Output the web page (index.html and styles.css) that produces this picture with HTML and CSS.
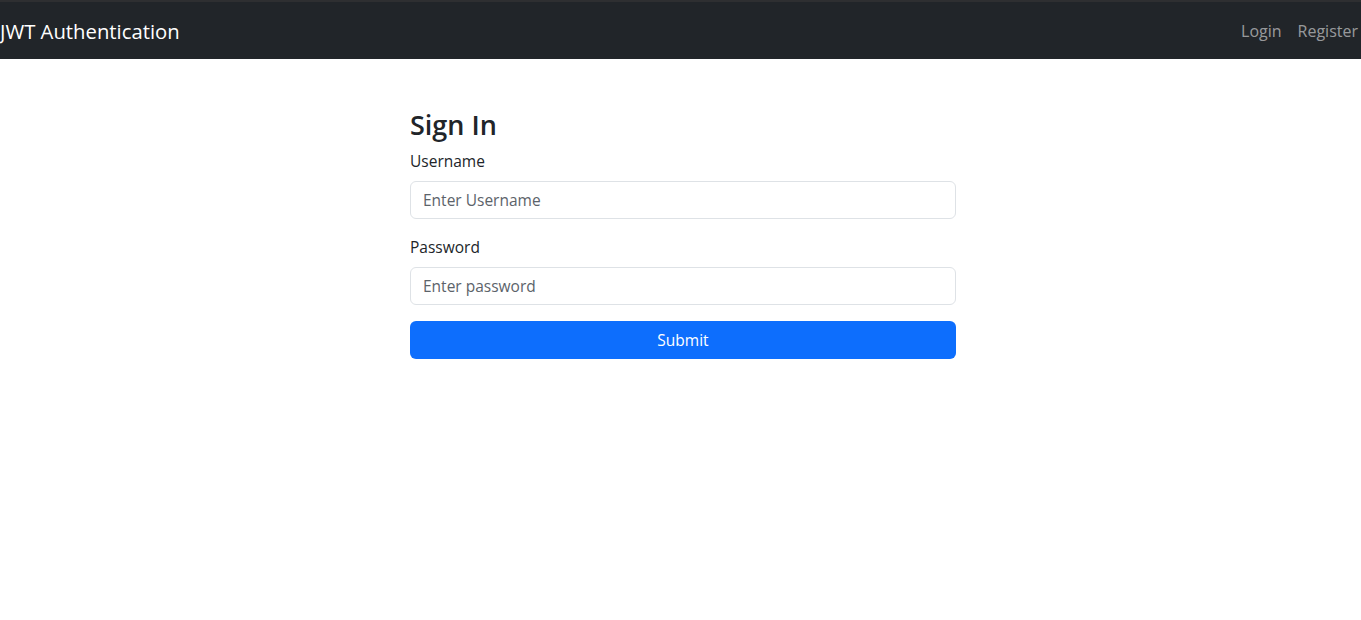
FILE: index.html
```html
<!DOCTYPE html>
<html lang="en">
<head>
<meta charset="utf-8">
<title>JWT Authentication</title>
<link rel="stylesheet" href="styles.css">
</head>
<body>
<div class="topline"></div>
<nav class="navbar">
  <a class="brand" href="#">JWT Authentication</a>
  <div class="nav-links">
    <a class="nav-link" href="#">Login</a>
    <a class="nav-link" href="#">Register</a>
  </div>
</nav>
<main class="page">
  <form class="signin">
    <h3 class="title">Sign In</h3>
    <div class="field">
      <label class="label" for="u">Username</label>
      <input class="input" id="u" type="text" placeholder="Enter Username">
    </div>
    <div class="field">
      <label class="label" for="p">Password</label>
      <input class="input" id="p" type="password" placeholder="Enter password">
    </div>
    <button class="btn" type="button">Submit</button>
  </form>
</main>
</body>
</html>
```
FILE: styles.css
```css
* { box-sizing: border-box; }
html, body { margin: 0; padding: 0; }
body {
  font-family: "Open Sans", "Noto Sans", sans-serif;
  font-size: 16px;
  line-height: 1.5;
  color: #212529;
  background: #fff;
}
.topline { height: 2px; background: #2e2f31; }
.navbar {
  height: 57px;
  background: #212529;
  display: flex;
  align-items: center;
  justify-content: space-between;
  padding: 0 3px 0 0;
}
.brand {
  color: #fff;
  text-decoration: none;
  font-size: 20.3px;
  line-height: 30px;
}
.nav-links { display: flex; }
.nav-link {
  color: rgba(255,255,255,.55);
  text-decoration: none;
  font-size: 16px;
  line-height: 24px;
  padding: 8px 8px;
}
.nav-link:last-child { padding-right: 0; }
.page {
  display: flex;
  justify-content: center;
  padding-top: 49px;
  padding-left: 5px;
}
.signin { width: 546px; }
.title {
  margin: 0 0 8px;
  font-size: 27px;
  font-weight: 600;
  line-height: 33px;
}
.field { margin-bottom: 16px; }
.label {
  display: block;
  margin-bottom: 8px;
  font-size: 15.5px;
  line-height: 24px;
}
.input {
  display: block;
  width: 100%;
  height: 38px;
  padding: 6px 12px;
  font-family: inherit;
  font-size: 15.5px;
  color: #212529;
  border: 1px solid #dee2e6;
  border-radius: 6px;
  background: #fff;
}
.input::placeholder { color: #5c636a; }
.btn {
  display: block;
  width: 100%;
  height: 38px;
  border: 0;
  border-radius: 6px;
  background: #0d6efd;
  color: #fff;
  font-family: inherit;
  font-size: 15.5px;
}
```
